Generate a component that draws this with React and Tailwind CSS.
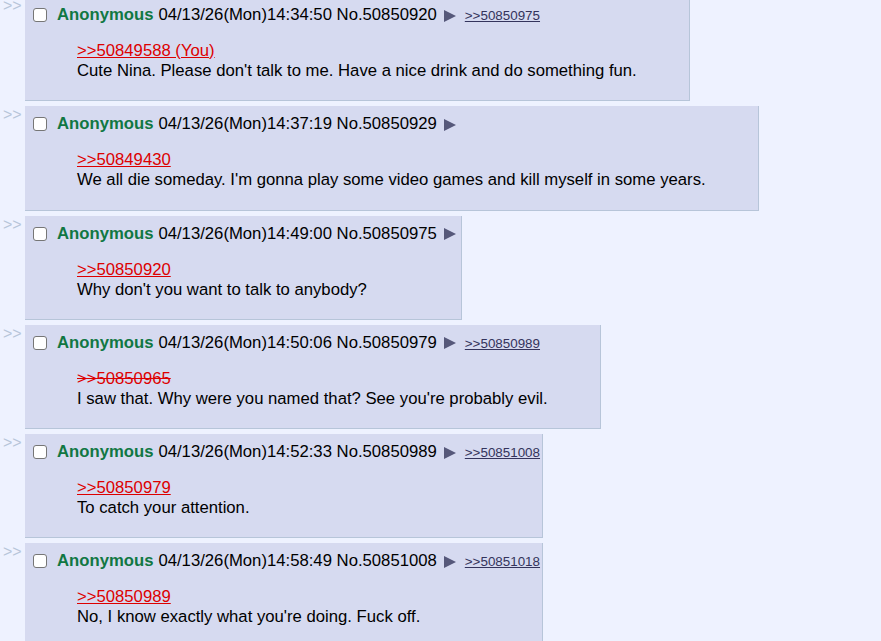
import React from "react";

const posts = [
  {
    no: "50850920",
    time: "14:34:50",
    quote: ">>50849588 (You)",
    text: "Cute Nina. Please don't talk to me. Have a nice drink and do something fun.",
    backlinks: [">>50850975"],
  },
  {
    no: "50850929",
    time: "14:37:19",
    quote: ">>50849430",
    text: "We all die someday. I'm gonna play some video games and kill myself in some years.",
    backlinks: [],
  },
  {
    no: "50850975",
    time: "14:49:00",
    quote: ">>50850920",
    text: "Why don't you want to talk to anybody?",
    backlinks: [],
  },
  {
    no: "50850979",
    time: "14:50:06",
    quote: ">>50850965",
    deleted: true,
    text: "I saw that. Why were you named that? See you're probably evil.",
    backlinks: [">>50850989"],
  },
  {
    no: "50850989",
    time: "14:52:33",
    quote: ">>50850979",
    text: "To catch your attention.",
    backlinks: [">>50851008"],
  },
  {
    no: "50851008",
    time: "14:58:49",
    quote: ">>50850989",
    text: "No, I know exactly what you're doing. Fuck off.",
    backlinks: [">>50851018"],
  },
];

function Arrow() {
  return (
    <svg width="12" height="12" viewBox="0 0 12 12" className="self-center ml-[7px] mt-[1px]">
      <polygon points="0,0 12,6 0,12" fill="#56587a" />
    </svg>
  );
}

function Post({ p }) {
  return (
    <div className="flex">
      <div className="w-[25px] shrink-0 pl-[3px] text-[16px] leading-[20px] text-[#b7c5d9] -mt-[1px]">&gt;&gt;</div>
      <div className="bg-[#d6daf0] border-r border-b border-[#b7c5d9] px-[2px] pt-[8px] pb-[19.25px]">
        <div className="flex items-baseline h-[20px] whitespace-nowrap">
          <div className="self-center ml-[6px] mr-[10px] w-[14px] h-[14px] shrink-0 rounded-[3px] border border-[#767676] bg-white" />
          <span className="font-bold text-[#117743]">Anonymous</span>
          <span className="ml-[5px]">04/13/26(Mon){p.time} No.{p.no}</span>
          <Arrow />
          {p.backlinks.length === 0 && <span className="w-[3px]" />}
          {p.backlinks.map((b) => (
            <a key={b} className="ml-[9px] text-[13.4px] text-[#34345c] underline">
              {b}
            </a>
          ))}
        </div>
        <div className="mt-[16px] ml-[50px] mr-[50px]">
          <div>
            <a className={`text-[#dd0000] ${p.deleted ? "line-through" : "underline"}`}>{p.quote}</a>
          </div>
          <div>{p.text}</div>
        </div>
      </div>
    </div>
  );
}

export default function App() {
  return (
    <div
      className="min-h-screen bg-[#eef2ff] text-black text-[16.7px] leading-[20px] overflow-hidden"
      style={{ fontFamily: '"Liberation Sans", Arial, sans-serif' }}
    >
      <div className="-mt-[3px] flex flex-col items-start gap-[5px]">
        {posts.map((p) => (
          <Post key={p.no} p={p} />
        ))}
      </div>
    </div>
  );
}
